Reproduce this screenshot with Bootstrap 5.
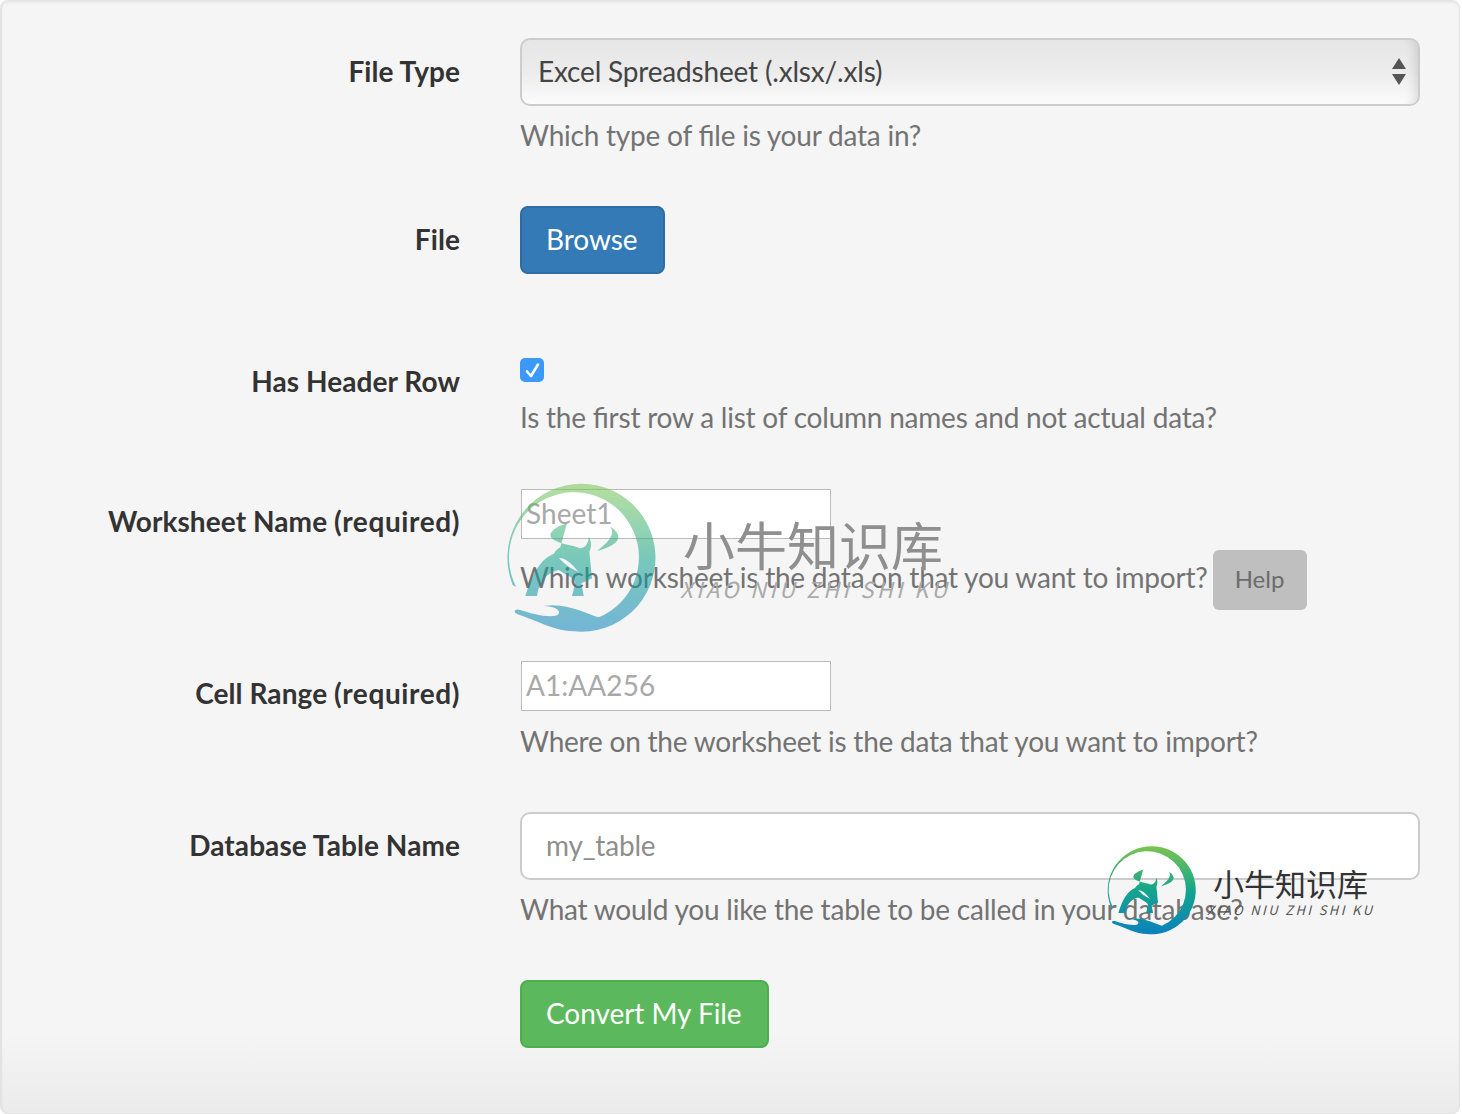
<!DOCTYPE html>
<html lang="en">
<head>
  <meta charset="UTF-8" />
  <meta name="viewport" content="width=device-width, initial-scale=1.0" />
  <title>Convert File</title>
  <link href="https://cdn.jsdelivr.net/npm/bootstrap@5.3.2/dist/css/bootstrap.min.css" rel="stylesheet" />
  <style>
    body { background: #fff; font-family: Lato, "Liberation Sans", sans-serif; font-size: 28px; color: #333; overflow: hidden; height: 1114px; font-feature-settings: "liga" 1; }
    .well-box { position: relative; width: 1460px; height: 1114px; background: linear-gradient(#f5f5f5 1030px, #ebebeb); border: 1px solid #e3e3e3; border-left-width: 2px; border-radius: 8px; padding-top: 37px; box-shadow: inset 0 2px 2px rgba(0,0,0,.05); }
    .form-line { display: flex; }
    .label-cell { width: 458px; text-align: right; font-weight: 700; line-height: 40px; flex: none; letter-spacing: .08px; }
    .label-cell em { font-style: normal; letter-spacing: .6px; }
    .field-cell { width: 900px; margin-left: 60px; flex: none; }
    .hint { color: #737373; line-height: 40px; letter-spacing: -0.22px; }
    .fake-select { height: 68px; border: 2px solid #ccc; border-radius: 10px; padding: 0 0 2px 16px; display: flex; align-items: center; justify-content: space-between; line-height: 1; color: #444; letter-spacing: -0.18px; background: linear-gradient(#e6e6e6, #ececec 50%, #fbfbfb); box-shadow: inset -12px 0 8px -8px rgba(0,0,0,.1); }
    .fake-select svg { margin-right: 12px; }
    .btn-browse, .btn-convert { font-size: 28px; letter-spacing: -0.05px; height: 68px; padding: 0 25px 2px 24px; border-radius: 8px; color: #fff; line-height: 1; }
    .btn-browse { background: #337ab7; border: 2px solid #2e6da4; }
    .btn-convert { background: #5cb85c; border: 2px solid #4cae4c; }
    .tick-box { display: block; width: 24px; height: 24px; border-radius: 5px; background: #3b99fc; }
    .tick-box svg { display: block; }
    .small-input { display: block; width: 310px; height: 50px; margin-left: 1px; border: 1px solid #bbb; border-radius: 0; background: #fff; padding: 0 4px 2px; font-size: 28px; letter-spacing: .05px; color: #333; outline: 0; }
    .small-input::placeholder, .wide-input::placeholder { color: #a9a9a9; opacity: 1; }
    .wide-input { display: block; width: 100%; height: 68px; border: 2px solid #ccc; border-radius: 10px; background: #fff; padding: 0 24px 2px; font-size: 28px; letter-spacing: -0.2px; outline: 0; }
    .wide-input::placeholder { color: #8e8e8e; }
    .help-chip { display: inline-block; width: 94px; height: 60px; line-height: 58px; margin-left: 5px; text-align: center; background: #bfbfbf; color: #6b6b6b; border-radius: 6px; font-size: 24px; flex: none; }
    .mark-over { position: absolute; left: -2px; top: -1px; pointer-events: none; }
    .mark-over text { font-family: "Noto Sans CJK SC", "Noto Sans", sans-serif; }
    .row-type { margin-bottom: 51px; }
    .row-file { margin-bottom: 84px; }
    .row-head { margin-bottom: 52px; }
    .row-sheet { margin-bottom: 51px; }
    .row-cell { margin-bottom: 51px; }
    .row-table { margin-bottom: 51px; }
    .pad-a { padding-top: 13px; }
    .pad-b { padding-top: 3px; }
    .pad-c { padding-top: 12px; }
    .gap-a { margin-top: 9px; }
    .gap-b { margin-top: 15px; }
    .gap-c { margin-top: 11px; }
    .gap-d { margin-top: 7px; }
    .gap-e { margin-top: 10px; }
  </style>
</head>
<body>
  <div class="well-box">
    <form>
      <div class="form-line row-type">
        <div class="label-cell pad-a">File Type</div>
        <div class="field-cell">
          <div class="fake-select">
            <span>Excel Spreadsheet (.xlsx/.xls)</span>
            <svg width="14" height="27" viewBox="0 0 14 27"><path d="M7 0 14 11H0zM0 16H14L7 27z" fill="#555"/></svg>
          </div>
          <div class="hint gap-a">Which type of file is your data in?</div>
        </div>
      </div>
      <div class="form-line row-file">
        <div class="label-cell pad-a">File</div>
        <div class="field-cell"><button type="button" class="btn btn-browse">Browse</button></div>
      </div>
      <div class="form-line row-head">
        <div class="label-cell pad-b">Has Header Row</div>
        <div class="field-cell">
          <span class="tick-box">
            <svg width="24" height="24" viewBox="0 0 24 24"><path d="M7 13.5 11 18 18 6.5" fill="none" stroke="#fff" stroke-width="2.6" stroke-linecap="round" stroke-linejoin="round"/></svg>
          </span>
          <div class="hint gap-b">Is the first row a list of column names and not actual data?</div>
        </div>
      </div>
      <div class="form-line row-sheet">
        <div class="label-cell pad-c">Worksheet Name <em>(required)</em></div>
        <div class="field-cell">
          <input class="small-input" placeholder="Sheet1" />
          <div class="gap-c d-flex"><span class="hint gap-d">Which worksheet is the data on that you want to import?</span><span class="help-chip">Help</span></div>
        </div>
      </div>
      <div class="form-line row-cell">
        <div class="label-cell pad-c">Cell Range <em>(required)</em></div>
        <div class="field-cell">
          <input class="small-input" placeholder="A1:AA256" />
          <div class="hint gap-e">Where on the worksheet is the data that you want to import?</div>
        </div>
      </div>
      <div class="form-line row-table">
        <div class="label-cell pad-a">Database Table Name</div>
        <div class="field-cell">
          <input class="wide-input" placeholder="my_table" />
          <div class="hint gap-a">What would you like the table to be called in your database?</div>
        </div>
      </div>
      <div class="form-line">
        <div class="label-cell"></div>
        <div class="field-cell"><button type="button" class="btn btn-convert">Convert My File</button></div>
      </div>
    </form>
    <svg class="mark-over" width="1460" height="1114" viewBox="0 0 1460 1114">
      <defs>
        <linearGradient id="paleGrad" gradientUnits="userSpaceOnUse" x1="0" y1="40" x2="0" y2="484"><stop offset="0" stop-color="#7cc44e"/><stop offset=".5" stop-color="#14a58c"/><stop offset="1" stop-color="#0a82bd"/></linearGradient>
        <g id="logoShape">
          <path d="M62 345A222 222 0 1 1 245 484C190 484 130 450 75 432 62 426 68 414 85 420 115 430 170 445 195 436 210 428 200 410 155 408 220 396 280 430 320 442A195 195 0 1 0 72 350Z"/>
          <path d="M225 160C190 170 165 190 180 205 200 225 250 225 262 235 275 235 290 225 290 200 300 215 298 235 292 245L300 325C285 330 270 320 250 295 230 270 205 255 185 270 180 255 190 240 205 232Z"/>
          <path d="M190 250C150 265 125 300 100 378H135C140 340 160 310 200 300 230 320 250 325 250 340L240 378H275L268 340 300 325 270 310C240 300 210 280 190 250Z"/>
          <path d="M355 170C365 185 365 205 315 243 345 235 385 220 378 195 375 185 365 175 355 170Z"/>
        </g>
      </defs>
      <use href="#logoShape" fill="url(#paleGrad)" opacity=".55" transform="translate(492 470) scale(.3333)"/>
      <text x="683" y="566" font-size="52" fill="#8f8f8f">小牛知识库</text>
      <text x="680" y="598" font-size="22" fill="#aaa" font-style="italic" textLength="267">XIAO NIU ZHI SHI KU</text>
      <use href="#logoShape" fill="url(#paleGrad)" transform="translate(1098.5 838) scale(.1983)"/>
      <text x="1213" y="896" font-size="31" fill="#333">小牛知识库</text>
      <text x="1207" y="915" font-size="13" fill="#555" font-style="italic" textLength="165">XIAO NIU ZHI SHI KU</text>
    </svg>
  </div>
  <script src="https://cdn.jsdelivr.net/npm/bootstrap@5.3.2/dist/js/bootstrap.bundle.min.js"></script>
</body>
</html>
